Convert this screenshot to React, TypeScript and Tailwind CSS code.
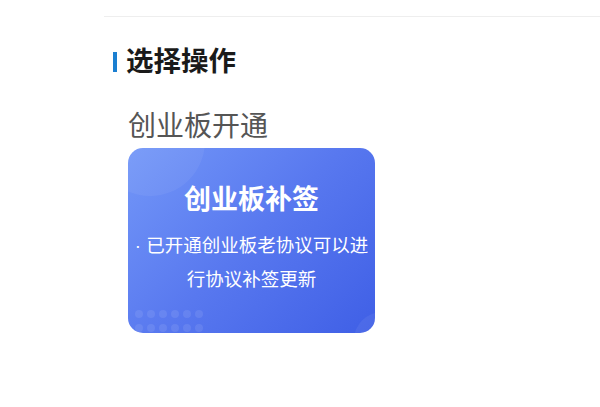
import React from "react";

const dots = Array.from({ length: 12 });

export default function App() {
  return (
    <div
      className="w-[600px] h-[407px] bg-white overflow-hidden"
      style={{ fontFamily: '"Liberation Sans", "Noto Sans CJK SC", sans-serif' }}
    >
      <div className="ml-[104px] mt-[16px] border-t border-[#eeeeee] pt-[27px]">
        <div className="flex items-center pl-[9px] gap-[9px] h-[36px]">
          <div className="w-[4px] h-[20px] bg-[#1b7fd1]" />
          <h1 className="text-[27.5px] leading-[36px] font-bold text-[#1a1a1a]">选择操作</h1>
        </div>
        <div className="pl-[24px] mt-[29px]">
          <div className="text-[28px] leading-[36px] text-[#555555]">创业板开通</div>
          <div className="relative mt-[3px] w-[247px] h-[185px] rounded-[15px] overflow-hidden bg-[linear-gradient(135deg,#7397f8_0%,#5878ef_50%,#3f5fe6_100%)] text-white">
            <div className="absolute -left-[33px] -top-[62px] w-[110px] h-[110px] rounded-full bg-white/[0.06]" />
            <div className="absolute -right-[35px] -bottom-[35px] w-[56px] h-[56px] rounded-full bg-white/[0.06]" />
            <div className="absolute left-[7px] top-[162px] grid grid-cols-6 gap-x-[4px] gap-y-[6px]">
              {dots.map((_, i) => (
                <div key={i} className="w-[8px] h-[8px] rounded-full bg-white/[0.09]" />
              ))}
            </div>
            <div className="relative flex flex-col items-center pt-[34px]">
              <div className="text-[27px] leading-[36px] font-bold">创业板补签</div>
              <div className="mt-[11px] text-[18.5px] leading-[34px] text-center">
                <div className="whitespace-nowrap">· 已开通创业板老协议可以进</div>
                <div className="whitespace-nowrap">行协议补签更新</div>
              </div>
            </div>
          </div>
        </div>
      </div>
    </div>
  );
}
